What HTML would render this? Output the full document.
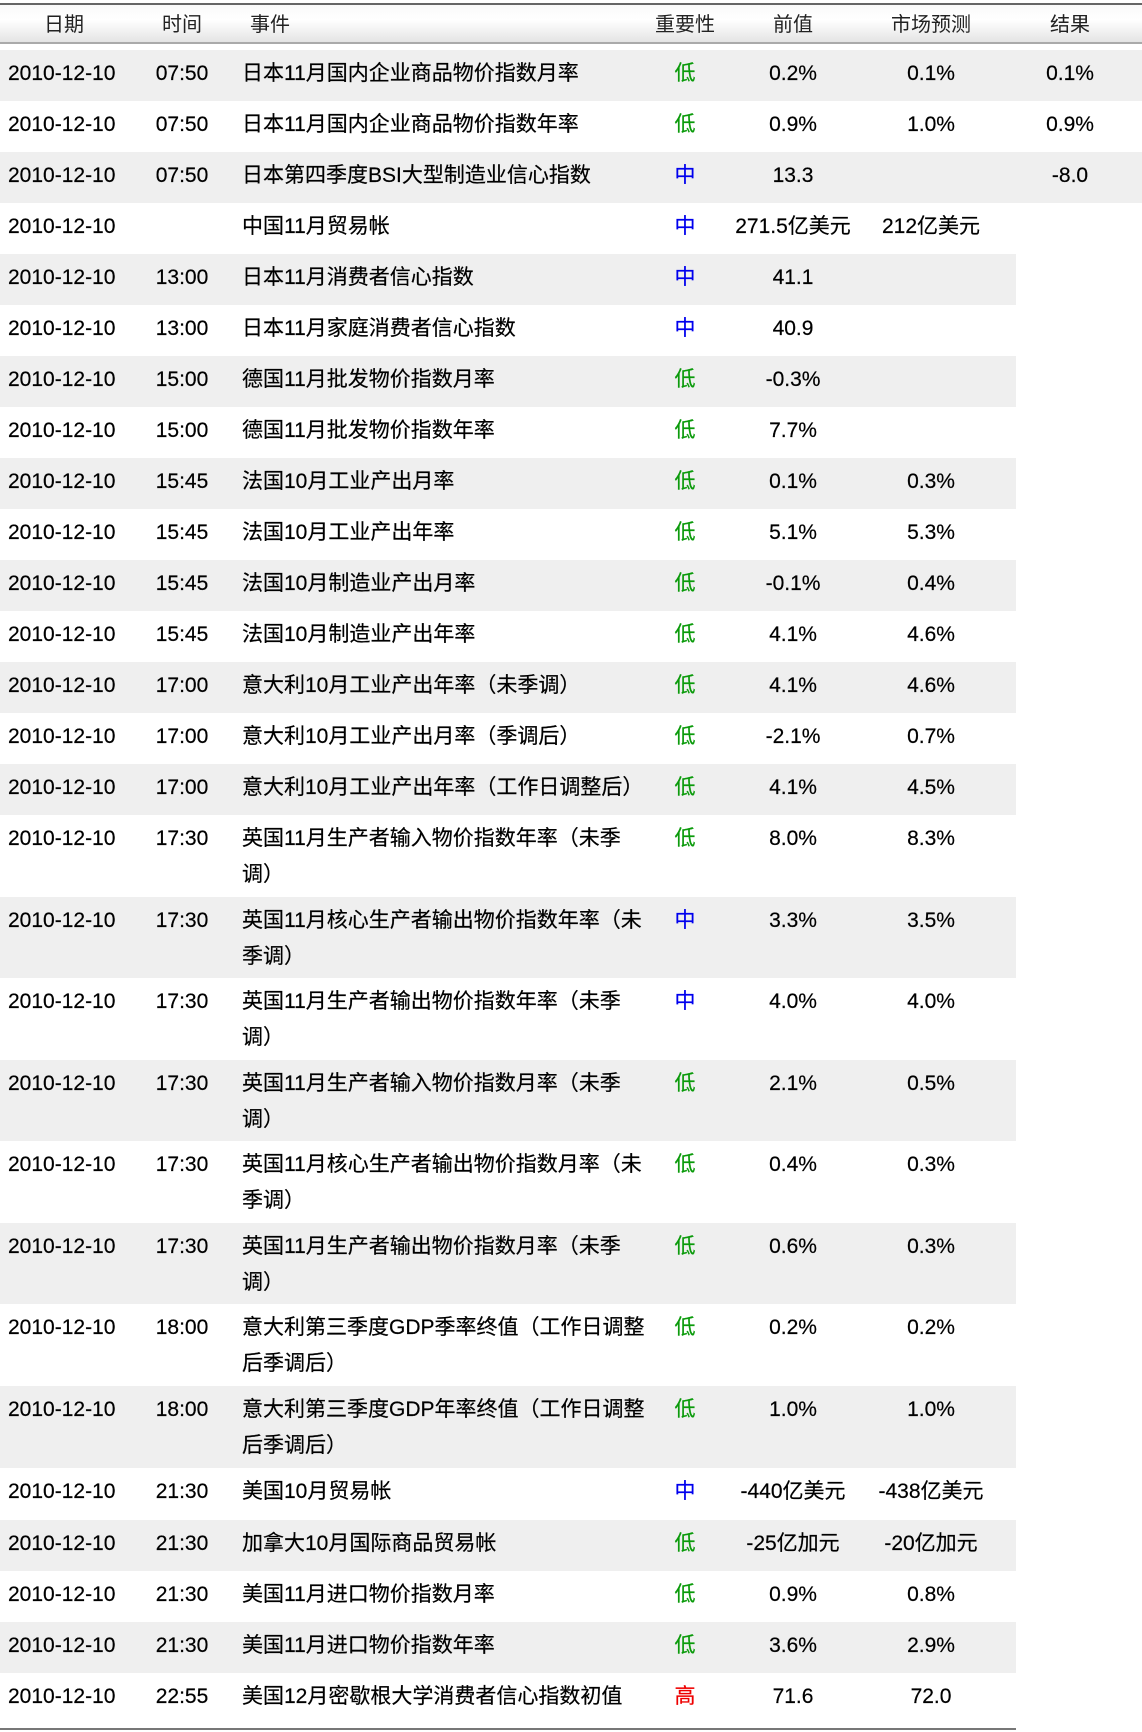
<!DOCTYPE html>
<html><head><meta charset="utf-8"><style>
body{margin:0;width:1142px;height:1732px;background:#fff;font-family:"Liberation Sans","Noto Sans CJK SC",sans-serif;color:#000;overflow:hidden;position:relative}
.hdr{position:absolute;left:0;top:3px;width:1142px;height:41px;border-top:2px solid #666;border-bottom:2px solid #aaa;box-sizing:border-box;background:linear-gradient(#fafafa,#fff 40%,#e4e4e4);font-size:20px;color:#222}
.hdr span{position:absolute;top:3px;transform:translateX(-50%)}
.r{position:absolute;left:0;width:1016px;font-size:21px}
.g{background:#efefef}
.r span{position:absolute;top:6px;line-height:36px;white-space:nowrap;-webkit-text-stroke:0.2px #000}
.d{left:8px}
.t{left:182px;transform:translateX(-50%)}
.e{left:242px}
.i{left:685px;transform:translateX(-50%)}
.p{left:793px;transform:translateX(-50%)}
.f{left:931px;transform:translateX(-50%)}
.x{left:1070px;transform:translateX(-50%)}
.r span.L{color:#0a9a0a;-webkit-text-stroke:0.2px #0a9a0a}.r span.M{color:#0000ee;-webkit-text-stroke:0.2px #0000ee}.r span.H{color:#ee0000;-webkit-text-stroke:0.2px #ee0000}
.bot{position:absolute;left:0;top:1728px;width:1016px;height:2px;background:#777}
</style></head><body>
<div class="hdr"><span style="left:64px">日期</span><span style="left:182px">时间</span><span style="left:270px">事件</span><span style="left:685px">重要性</span><span style="left:793px">前值</span><span style="left:931px">市场预测</span><span style="left:1070px">结果</span></div>

<div class="r g" style="top:50px;height:51px;width:1142px"><span class="d">2010-12-10</span><span class="t">07:50</span><span class="e">日本11月国内企业商品物价指数月率</span><span class="i L">低</span><span class="p">0.2%</span><span class="f">0.1%</span><span class="x">0.1%</span></div>
<div class="r" style="top:101px;height:51px;width:1142px"><span class="d">2010-12-10</span><span class="t">07:50</span><span class="e">日本11月国内企业商品物价指数年率</span><span class="i L">低</span><span class="p">0.9%</span><span class="f">1.0%</span><span class="x">0.9%</span></div>
<div class="r g" style="top:152px;height:51px;width:1142px"><span class="d">2010-12-10</span><span class="t">07:50</span><span class="e">日本第四季度BSI大型制造业信心指数</span><span class="i M">中</span><span class="p">13.3</span><span class="x">-8.0</span></div>
<div class="r" style="top:203px;height:51px"><span class="d">2010-12-10</span><span class="e">中国11月贸易帐</span><span class="i M">中</span><span class="p">271.5亿美元</span><span class="f">212亿美元</span></div>
<div class="r g" style="top:254px;height:51px"><span class="d">2010-12-10</span><span class="t">13:00</span><span class="e">日本11月消费者信心指数</span><span class="i M">中</span><span class="p">41.1</span></div>
<div class="r" style="top:305px;height:51px"><span class="d">2010-12-10</span><span class="t">13:00</span><span class="e">日本11月家庭消费者信心指数</span><span class="i M">中</span><span class="p">40.9</span></div>
<div class="r g" style="top:356px;height:51px"><span class="d">2010-12-10</span><span class="t">15:00</span><span class="e">德国11月批发物价指数月率</span><span class="i L">低</span><span class="p">-0.3%</span></div>
<div class="r" style="top:407px;height:51px"><span class="d">2010-12-10</span><span class="t">15:00</span><span class="e">德国11月批发物价指数年率</span><span class="i L">低</span><span class="p">7.7%</span></div>
<div class="r g" style="top:458px;height:51px"><span class="d">2010-12-10</span><span class="t">15:45</span><span class="e">法国10月工业产出月率</span><span class="i L">低</span><span class="p">0.1%</span><span class="f">0.3%</span></div>
<div class="r" style="top:509px;height:51px"><span class="d">2010-12-10</span><span class="t">15:45</span><span class="e">法国10月工业产出年率</span><span class="i L">低</span><span class="p">5.1%</span><span class="f">5.3%</span></div>
<div class="r g" style="top:560px;height:51px"><span class="d">2010-12-10</span><span class="t">15:45</span><span class="e">法国10月制造业产出月率</span><span class="i L">低</span><span class="p">-0.1%</span><span class="f">0.4%</span></div>
<div class="r" style="top:611px;height:51px"><span class="d">2010-12-10</span><span class="t">15:45</span><span class="e">法国10月制造业产出年率</span><span class="i L">低</span><span class="p">4.1%</span><span class="f">4.6%</span></div>
<div class="r g" style="top:662px;height:51px"><span class="d">2010-12-10</span><span class="t">17:00</span><span class="e">意大利10月工业产出年率（未季调）</span><span class="i L">低</span><span class="p">4.1%</span><span class="f">4.6%</span></div>
<div class="r" style="top:713px;height:51px"><span class="d">2010-12-10</span><span class="t">17:00</span><span class="e">意大利10月工业产出月率（季调后）</span><span class="i L">低</span><span class="p">-2.1%</span><span class="f">0.7%</span></div>
<div class="r g" style="top:764px;height:51px"><span class="d">2010-12-10</span><span class="t">17:00</span><span class="e">意大利10月工业产出年率（工作日调整后）</span><span class="i L">低</span><span class="p">4.1%</span><span class="f">4.5%</span></div>

<div class="r" style="top:815px;height:82px"><span class="d">2010-12-10</span><span class="t">17:30</span><span class="e">英国11月生产者输入物价指数年率（未季<br>调）</span><span class="i L">低</span><span class="p">8.0%</span><span class="f">8.3%</span></div>
<div class="r g" style="top:897px;height:81px"><span class="d">2010-12-10</span><span class="t">17:30</span><span class="e">英国11月核心生产者输出物价指数年率（未<br>季调）</span><span class="i M">中</span><span class="p">3.3%</span><span class="f">3.5%</span></div>
<div class="r" style="top:978px;height:82px"><span class="d">2010-12-10</span><span class="t">17:30</span><span class="e">英国11月生产者输出物价指数年率（未季<br>调）</span><span class="i M">中</span><span class="p">4.0%</span><span class="f">4.0%</span></div>
<div class="r g" style="top:1060px;height:81px"><span class="d">2010-12-10</span><span class="t">17:30</span><span class="e">英国11月生产者输入物价指数月率（未季<br>调）</span><span class="i L">低</span><span class="p">2.1%</span><span class="f">0.5%</span></div>
<div class="r" style="top:1141px;height:82px"><span class="d">2010-12-10</span><span class="t">17:30</span><span class="e">英国11月核心生产者输出物价指数月率（未<br>季调）</span><span class="i L">低</span><span class="p">0.4%</span><span class="f">0.3%</span></div>
<div class="r g" style="top:1223px;height:81px"><span class="d">2010-12-10</span><span class="t">17:30</span><span class="e">英国11月生产者输出物价指数月率（未季<br>调）</span><span class="i L">低</span><span class="p">0.6%</span><span class="f">0.3%</span></div>
<div class="r" style="top:1304px;height:82px"><span class="d">2010-12-10</span><span class="t">18:00</span><span class="e">意大利第三季度GDP季率终值（工作日调整<br>后季调后）</span><span class="i L">低</span><span class="p">0.2%</span><span class="f">0.2%</span></div>
<div class="r g" style="top:1386px;height:82px"><span class="d">2010-12-10</span><span class="t">18:00</span><span class="e">意大利第三季度GDP年率终值（工作日调整<br>后季调后）</span><span class="i L">低</span><span class="p">1.0%</span><span class="f">1.0%</span></div>

<div class="r" style="top:1468px;height:52px"><span class="d">2010-12-10</span><span class="t">21:30</span><span class="e">美国10月贸易帐</span><span class="i M">中</span><span class="p">-440亿美元</span><span class="f">-438亿美元</span></div>
<div class="r g" style="top:1520px;height:51px"><span class="d">2010-12-10</span><span class="t">21:30</span><span class="e">加拿大10月国际商品贸易帐</span><span class="i L">低</span><span class="p">-25亿加元</span><span class="f">-20亿加元</span></div>
<div class="r" style="top:1571px;height:51px"><span class="d">2010-12-10</span><span class="t">21:30</span><span class="e">美国11月进口物价指数月率</span><span class="i L">低</span><span class="p">0.9%</span><span class="f">0.8%</span></div>
<div class="r g" style="top:1622px;height:51px"><span class="d">2010-12-10</span><span class="t">21:30</span><span class="e">美国11月进口物价指数年率</span><span class="i L">低</span><span class="p">3.6%</span><span class="f">2.9%</span></div>
<div class="r" style="top:1673px;height:51px"><span class="d">2010-12-10</span><span class="t">22:55</span><span class="e">美国12月密歇根大学消费者信心指数初值</span><span class="i H">高</span><span class="p">71.6</span><span class="f">72.0</span></div>
<div class="bot"></div>
</body></html>
